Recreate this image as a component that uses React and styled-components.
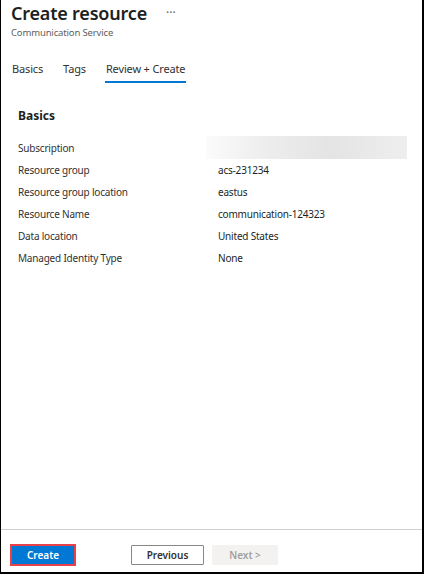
import styled, { createGlobalStyle } from "styled-components";

const Global = createGlobalStyle`
  html, body {
    margin: 0;
    padding: 0;
    background: #fff;
  }
  body {
    font-family: "Noto Sans", "Open Sans", sans-serif;
    color: #323130;
  }
`;

const rows = [
  { label: "Subscription", blurred: true },
  { label: "Resource group", value: "acs-231234" },
  { label: "Resource group location", value: "eastus" },
  { label: "Resource Name", value: "communication-124323" },
  { label: "Data location", value: "United States" },
  { label: "Managed Identity Type", value: "None" },
];

function App() {
  return (
    <>
      <Global />
      <Frame>
        <Header>
          <TitleRow>
            <Title>Create resource</Title>
            <More>···</More>
          </TitleRow>
          <Subtitle>Communication Service</Subtitle>
        </Header>
        <Tabs>
          <Tab>Basics</Tab>
          <Tab>Tags</Tab>
          <Tab $active>Review + Create</Tab>
        </Tabs>
        <Content>
          <SectionTitle>Basics</SectionTitle>
          <Summary>
            {rows.map((r) => (
              <Row key={r.label}>
                <Label>{r.label}</Label>
                {r.blurred ? <Blur /> : <Value>{r.value}</Value>}
              </Row>
            ))}
          </Summary>
        </Content>
        <Footer>
          <PrimaryButton>Create</PrimaryButton>
          <Button>Previous</Button>
          <Button disabled>Next &gt;</Button>
        </Footer>
      </Frame>
    </>
  );
}
export default App;

const Frame = styled.div`
  width: 424px;
  height: 574px;
  box-sizing: border-box;
  border-left: 1px solid #000;
  border-right: 2px solid #000;
  border-bottom: 2px solid #000;
  display: flex;
  flex-direction: column;
`;

const Header = styled.div`
  padding: 0 0 0 10px;
`;

const TitleRow = styled.div`
  display: flex;
  align-items: center;
  gap: 19px;
`;

const Title = styled.h1`
  margin: 0;
  font-size: 18px;
  font-weight: 600;
  line-height: 26px;
  color: #201f1e;
  letter-spacing: -0.2px;
`;

const More = styled.span`
  font-size: 12px;
  color: #605e5c;
  line-height: 12px;
`;

const Subtitle = styled.div`
  font-size: 9.5px;
  line-height: 14px;
  color: #605e5c;
  letter-spacing: -0.15px;
`;

const Tabs = styled.div`
  display: flex;
  gap: 18px;
  padding: 19px 0 0 10px;
`;

const Tab = styled.div`
  font-size: 11px;
  line-height: 16px;
  color: #323130;
  letter-spacing: -0.15px;
  padding: 2px 1px 4px;
  border-bottom: 2px solid ${(p) => (p.$active ? "#0078d4" : "transparent")};
`;

const Content = styled.div`
  flex: 1;
  padding: 24px 18px 0 17px;
`;

const SectionTitle = styled.h2`
  margin: 0 0 12px;
  font-size: 12px;
  font-weight: 700;
  line-height: 18px;
  color: #201f1e;
`;

const Summary = styled.div`
  display: flex;
  flex-direction: column;
`;

const Row = styled.div`
  display: grid;
  grid-template-columns: 188px 1fr;
  align-items: center;
  height: 22px;
  font-size: 10px;
  letter-spacing: -0.2px;
`;

const Label = styled.span`
  color: #323130;
`;

const Value = styled.span`
  padding-left: 12px;
  color: #201f1e;
`;

const Blur = styled.div`
  height: 23px;
  width: 201px;
  margin-top: -1px;
  background: linear-gradient(90deg, #fbfbfb 0%, #ededed 30%, #e4e4e4 62%, #eeeeee 100%);
`;

const Footer = styled.div`
  border-top: 1px solid #d2d0ce;
  height: 43px;
  box-sizing: border-box;
  display: flex;
  align-items: flex-start;
  padding: 14px 0 0 9px;
  gap: 8px;
`;

const Button = styled.button`
  font-family: inherit;
  height: 20px;
  margin-top: 1px;
  width: ${(p) => (p.disabled ? "66px" : "73px")};
  font-size: 10px;
  font-weight: 600;
  border: 1px solid ${(p) => (p.disabled ? "#f3f2f1" : "#8a8886")};
  background: ${(p) => (p.disabled ? "#f3f2f1" : "#fff")};
  color: ${(p) => (p.disabled ? "#a19f9d" : "#323130")};
  padding: 0;
  border-radius: 1px;
`;

const PrimaryButton = styled.button`
  font-family: inherit;
  height: 22px;
  width: 66px;
  margin-right: 47px;
  font-size: 10px;
  font-weight: 600;
  color: #fff;
  background: #0078d4;
  border: 2px solid #e8414a;
  box-sizing: border-box;
  padding: 0;
`;
